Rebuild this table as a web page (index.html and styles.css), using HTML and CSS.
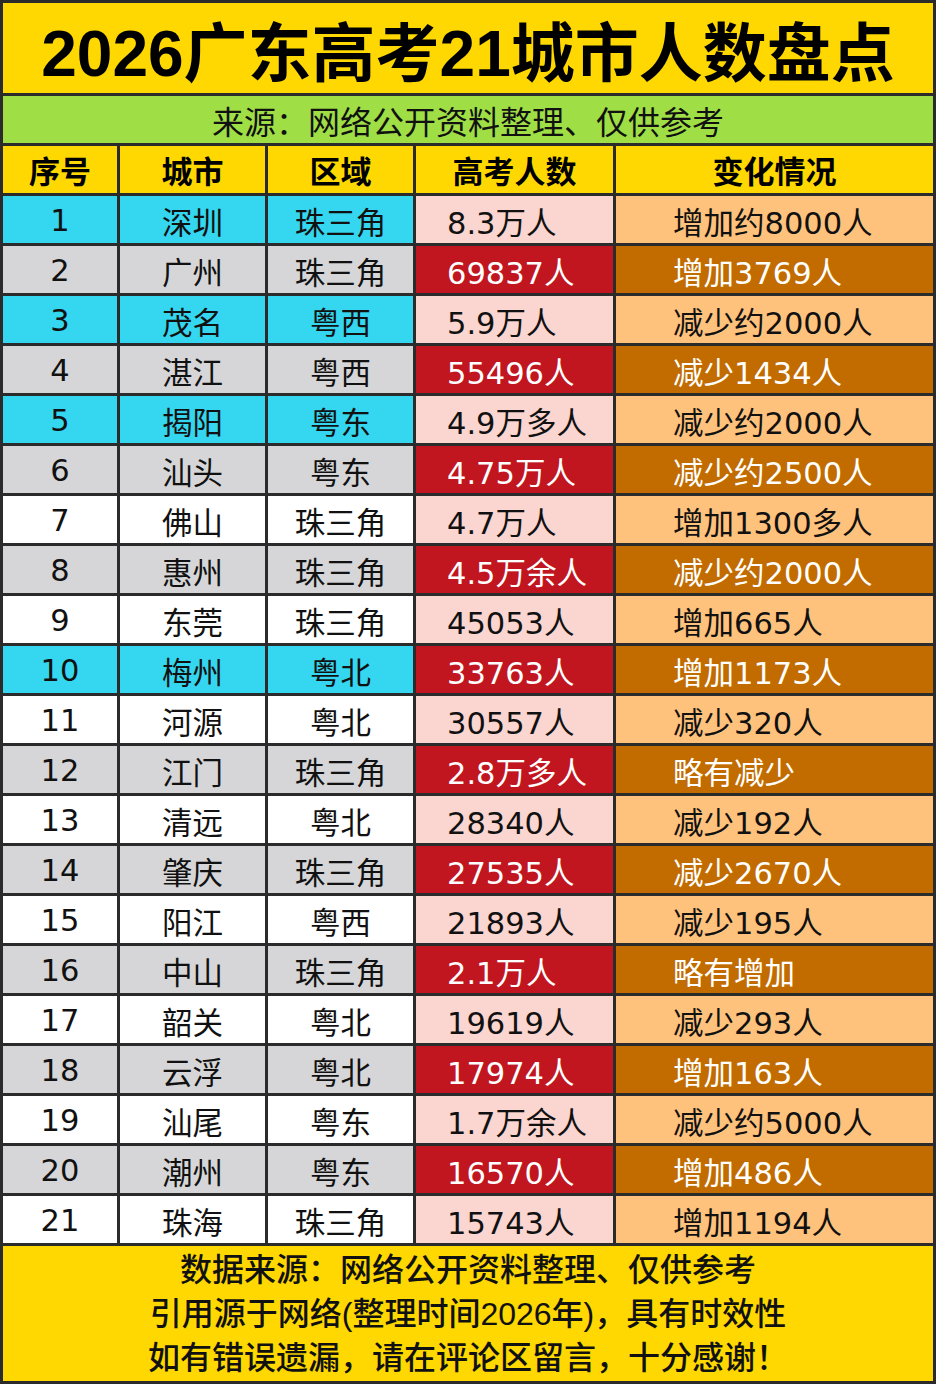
FILE: index.html
```html
<!DOCTYPE html>
<html lang="zh">
<head>
<meta charset="utf-8">
<title>2026广东高考21城市人数盘点</title>
<link rel="stylesheet" href="styles.css">
</head>
<body>
<div class="sheet">
  <div class="title">2026广东高考21城市人数盘点</div>
  <div class="source">来源：网络公开资料整理、仅供参考</div>
  <div class="grid">
    <div class="hd">序号</div><div class="hd">城市</div><div class="hd">区域</div><div class="hd">高考人数</div><div class="hd">变化情况</div>

    <div class="c cy">1</div><div class="c cy">深圳</div><div class="c cy">珠三角</div><div class="n lt">8.3万人</div><div class="ch lt">增加约8000人</div>
    <div class="c gy">2</div><div class="c gy">广州</div><div class="c gy">珠三角</div><div class="n dk">69837人</div><div class="ch dk">增加3769人</div>
    <div class="c cy">3</div><div class="c cy">茂名</div><div class="c cy">粤西</div><div class="n lt">5.9万人</div><div class="ch lt">减少约2000人</div>
    <div class="c gy">4</div><div class="c gy">湛江</div><div class="c gy">粤西</div><div class="n dk">55496人</div><div class="ch dk">减少1434人</div>
    <div class="c cy">5</div><div class="c cy">揭阳</div><div class="c cy">粤东</div><div class="n lt">4.9万多人</div><div class="ch lt">减少约2000人</div>
    <div class="c gy">6</div><div class="c gy">汕头</div><div class="c gy">粤东</div><div class="n dk">4.75万人</div><div class="ch dk">减少约2500人</div>
    <div class="c wh">7</div><div class="c wh">佛山</div><div class="c wh">珠三角</div><div class="n lt">4.7万人</div><div class="ch lt">增加1300多人</div>
    <div class="c gy">8</div><div class="c gy">惠州</div><div class="c gy">珠三角</div><div class="n dk">4.5万余人</div><div class="ch dk">减少约2000人</div>
    <div class="c wh">9</div><div class="c wh">东莞</div><div class="c wh">珠三角</div><div class="n lt">45053人</div><div class="ch lt">增加665人</div>
    <div class="c cy">10</div><div class="c cy">梅州</div><div class="c cy">粤北</div><div class="n dk">33763人</div><div class="ch dk">增加1173人</div>
    <div class="c wh">11</div><div class="c wh">河源</div><div class="c wh">粤北</div><div class="n lt">30557人</div><div class="ch lt">减少320人</div>
    <div class="c gy">12</div><div class="c gy">江门</div><div class="c gy">珠三角</div><div class="n dk">2.8万多人</div><div class="ch dk">略有减少</div>
    <div class="c wh">13</div><div class="c wh">清远</div><div class="c wh">粤北</div><div class="n lt">28340人</div><div class="ch lt">减少192人</div>
    <div class="c gy">14</div><div class="c gy">肇庆</div><div class="c gy">珠三角</div><div class="n dk">27535人</div><div class="ch dk">减少2670人</div>
    <div class="c wh">15</div><div class="c wh">阳江</div><div class="c wh">粤西</div><div class="n lt">21893人</div><div class="ch lt">减少195人</div>
    <div class="c gy">16</div><div class="c gy">中山</div><div class="c gy">珠三角</div><div class="n dk">2.1万人</div><div class="ch dk">略有增加</div>
    <div class="c wh">17</div><div class="c wh">韶关</div><div class="c wh">粤北</div><div class="n lt">19619人</div><div class="ch lt">减少293人</div>
    <div class="c gy">18</div><div class="c gy">云浮</div><div class="c gy">粤北</div><div class="n dk">17974人</div><div class="ch dk">增加163人</div>
    <div class="c wh">19</div><div class="c wh">汕尾</div><div class="c wh">粤东</div><div class="n lt">1.7万余人</div><div class="ch lt">减少约5000人</div>
    <div class="c gy">20</div><div class="c gy">潮州</div><div class="c gy">粤东</div><div class="n dk">16570人</div><div class="ch dk">增加486人</div>
    <div class="c wh">21</div><div class="c wh">珠海</div><div class="c wh">珠三角</div><div class="n lt">15743人</div><div class="ch lt">增加1194人</div>
  </div>
  <div class="footer">
    <div>数据来源：网络公开资料整理、仅供参考</div>
    <div>引用源于网络(整理时间2026年)，具有时效性</div>
    <div>如有错误遗漏，请在评论区留言，十分感谢！</div>
  </div>
</div>
</body>
</html>
```

FILE: styles.css
```css
* { box-sizing: border-box; }
html, body { margin: 0; padding: 0; }
body {
  width: 936px;
  font-family: "Liberation Sans", "Noto Sans CJK SC", sans-serif;
  color: #111;
}
.sheet {
  width: 936px;
  height: 1384px;
  background: #2b2b2b;
  padding: 3px;
  display: flex;
  flex-direction: column;
  gap: 3px;
}
.title {
  height: 90px;
  background: #fed800;
  display: flex;
  align-items: center;
  justify-content: center;
  font-family: "Liberation Sans", "Noto Sans CJK SC", sans-serif;
  font-weight: 700;
  font-size: 64px;
  color: #000;
}
.source {
  height: 47px;
  background: #9fdf45;
  display: flex;
  align-items: center;
  justify-content: center;
  font-family: "Noto Sans CJK SC", sans-serif;
  font-size: 32px;
  color: #111;
}
.grid {
  display: grid;
  grid-template-columns: 114px 145px 145px 197px 317px;
  grid-auto-rows: 47px;
  gap: 3px;
}
.grid > div {
  display: flex;
  align-items: center;
  font-family: "DejaVu Sans", "Noto Sans CJK SC", sans-serif;
  font-size: 30.5px;
  white-space: nowrap;
  padding-top: 2px;
}
.hd {
  background: #fed800;
  justify-content: center;
  font-weight: 700;
  color: #000;
}
.grid > .hd { font-family: "Noto Sans CJK SC", sans-serif; font-size: 31px; padding-top: 0; }
.c { justify-content: center; }
.cy { background: #35d6ef; }
.gy { background: #d6d6d8; }
.wh { background: #ffffff; }
.n { padding-left: 31px; }
.ch { padding-left: 57px; }
.n.lt { background: #fbd5d0; }
.n.dk { background: #c1161f; color: #fff; }
.ch.lt { background: #ffc27c; }
.ch.dk { background: #c26c00; color: #fff; }
.footer {
  flex: 1;
  background: #fed800;
  display: flex;
  flex-direction: column;
  align-items: center;
  justify-content: center;
  font-family: "Liberation Sans", "Noto Sans CJK SC", sans-serif;
  font-weight: 500;
  font-size: 32px;
  line-height: 44px;
  color: #111;
}
```
